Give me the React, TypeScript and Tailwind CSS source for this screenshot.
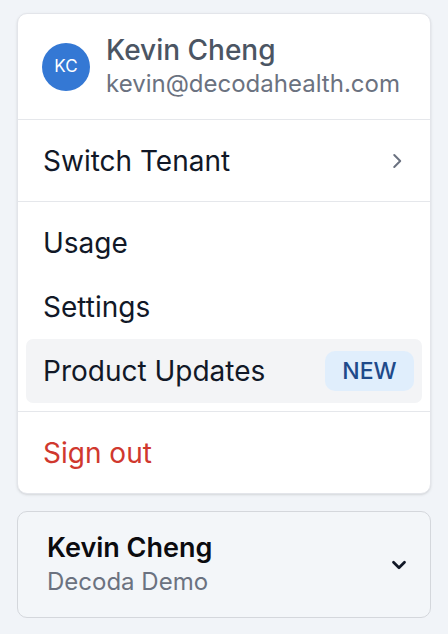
import React from "react";

function ChevronRight() {
  return (
    <svg width="22" height="22" viewBox="0 0 24 24" fill="none" stroke="#6b7280" strokeWidth="2.2" strokeLinecap="round" strokeLinejoin="round">
      <path d="M9 5.5l6.5 6.5-6.5 6.5" />
    </svg>
  );
}

function ChevronDown() {
  return (
    <svg width="22" height="22" viewBox="0 0 24 24" fill="none" stroke="#111827" strokeWidth="3" strokeLinecap="round" strokeLinejoin="round">
      <path d="M6 9l6 6 6-6" />
    </svg>
  );
}

export default function App() {
  return (
    <div className="min-h-[634px] w-[448px] bg-[#f1f4f8] px-[17px] pt-[13px] text-[#111827]" style={{ fontFamily: "Inter, 'Noto Sans', sans-serif" }}>
      <div className="overflow-hidden rounded-[10px] border border-[#e3e5ea] bg-white shadow-sm">
        <div className="flex h-[105px] items-center gap-[16px] pl-[24px]">
          <div className="flex h-[48px] w-[48px] items-center justify-center rounded-full bg-[#3478d4] text-[17px] text-white">KC</div>
          <div className="flex flex-col pt-[1px]">
            <div className="text-[28px] font-medium leading-[34px] text-[#4b5563]">Kevin Cheng</div>
            <div className="text-[24px] leading-[34px] text-[#6b7280]">kevin@decodahealth.com</div>
          </div>
        </div>
        <div className="h-px bg-[#e5e7eb]" />
        <div className="pb-[8px] pl-[8px] pr-[8px] pt-[9px]">
          <div className="flex h-[64px] items-center justify-between pl-[17px] pr-[14px]">
            <span className="text-[28px]">Switch Tenant</span>
            <ChevronRight />
          </div>
        </div>
        <div className="h-px bg-[#e5e7eb]" />
        <div className="pb-[8px] pl-[8px] pr-[8px] pt-[9px]">
          <div className="flex h-[64px] items-center pl-[17px]">
            <span className="text-[28px]">Usage</span>
          </div>
          <div className="flex h-[64px] items-center pl-[17px]">
            <span className="text-[28px]">Settings</span>
          </div>
          <div className="flex h-[64px] items-center justify-between rounded-[7px] bg-[#f3f4f6] pl-[17px] pr-[8px]">
            <span className="text-[28px]">Product Updates</span>
            <span className="flex h-[40px] w-[89px] items-center justify-center rounded-[10px] bg-[#e0eefc] text-[23px] font-medium text-[#1e4a8a]">NEW</span>
          </div>
        </div>
        <div className="h-px bg-[#e5e7eb]" />
        <div className="pb-[8px] pl-[8px] pr-[8px] pt-[9px]">
          <div className="flex h-[64px] items-center pl-[17px]">
            <span className="text-[28px] text-[#d0382e]">Sign out</span>
          </div>
        </div>
      </div>
      <div className="mt-[17px] flex h-[107px] items-center justify-between rounded-[10px] border border-[#d4d7dc] bg-[#f3f6f9] pl-[29px] pr-[20px]">
        <div className="flex flex-col">
          <div className="text-[27px] font-semibold leading-[34px] text-[#0b0b0f]">Kevin Cheng</div>
          <div className="text-[24px] leading-[34px] text-[#6b7280]">Decoda Demo</div>
        </div>
        <ChevronDown />
      </div>
    </div>
  );
}
